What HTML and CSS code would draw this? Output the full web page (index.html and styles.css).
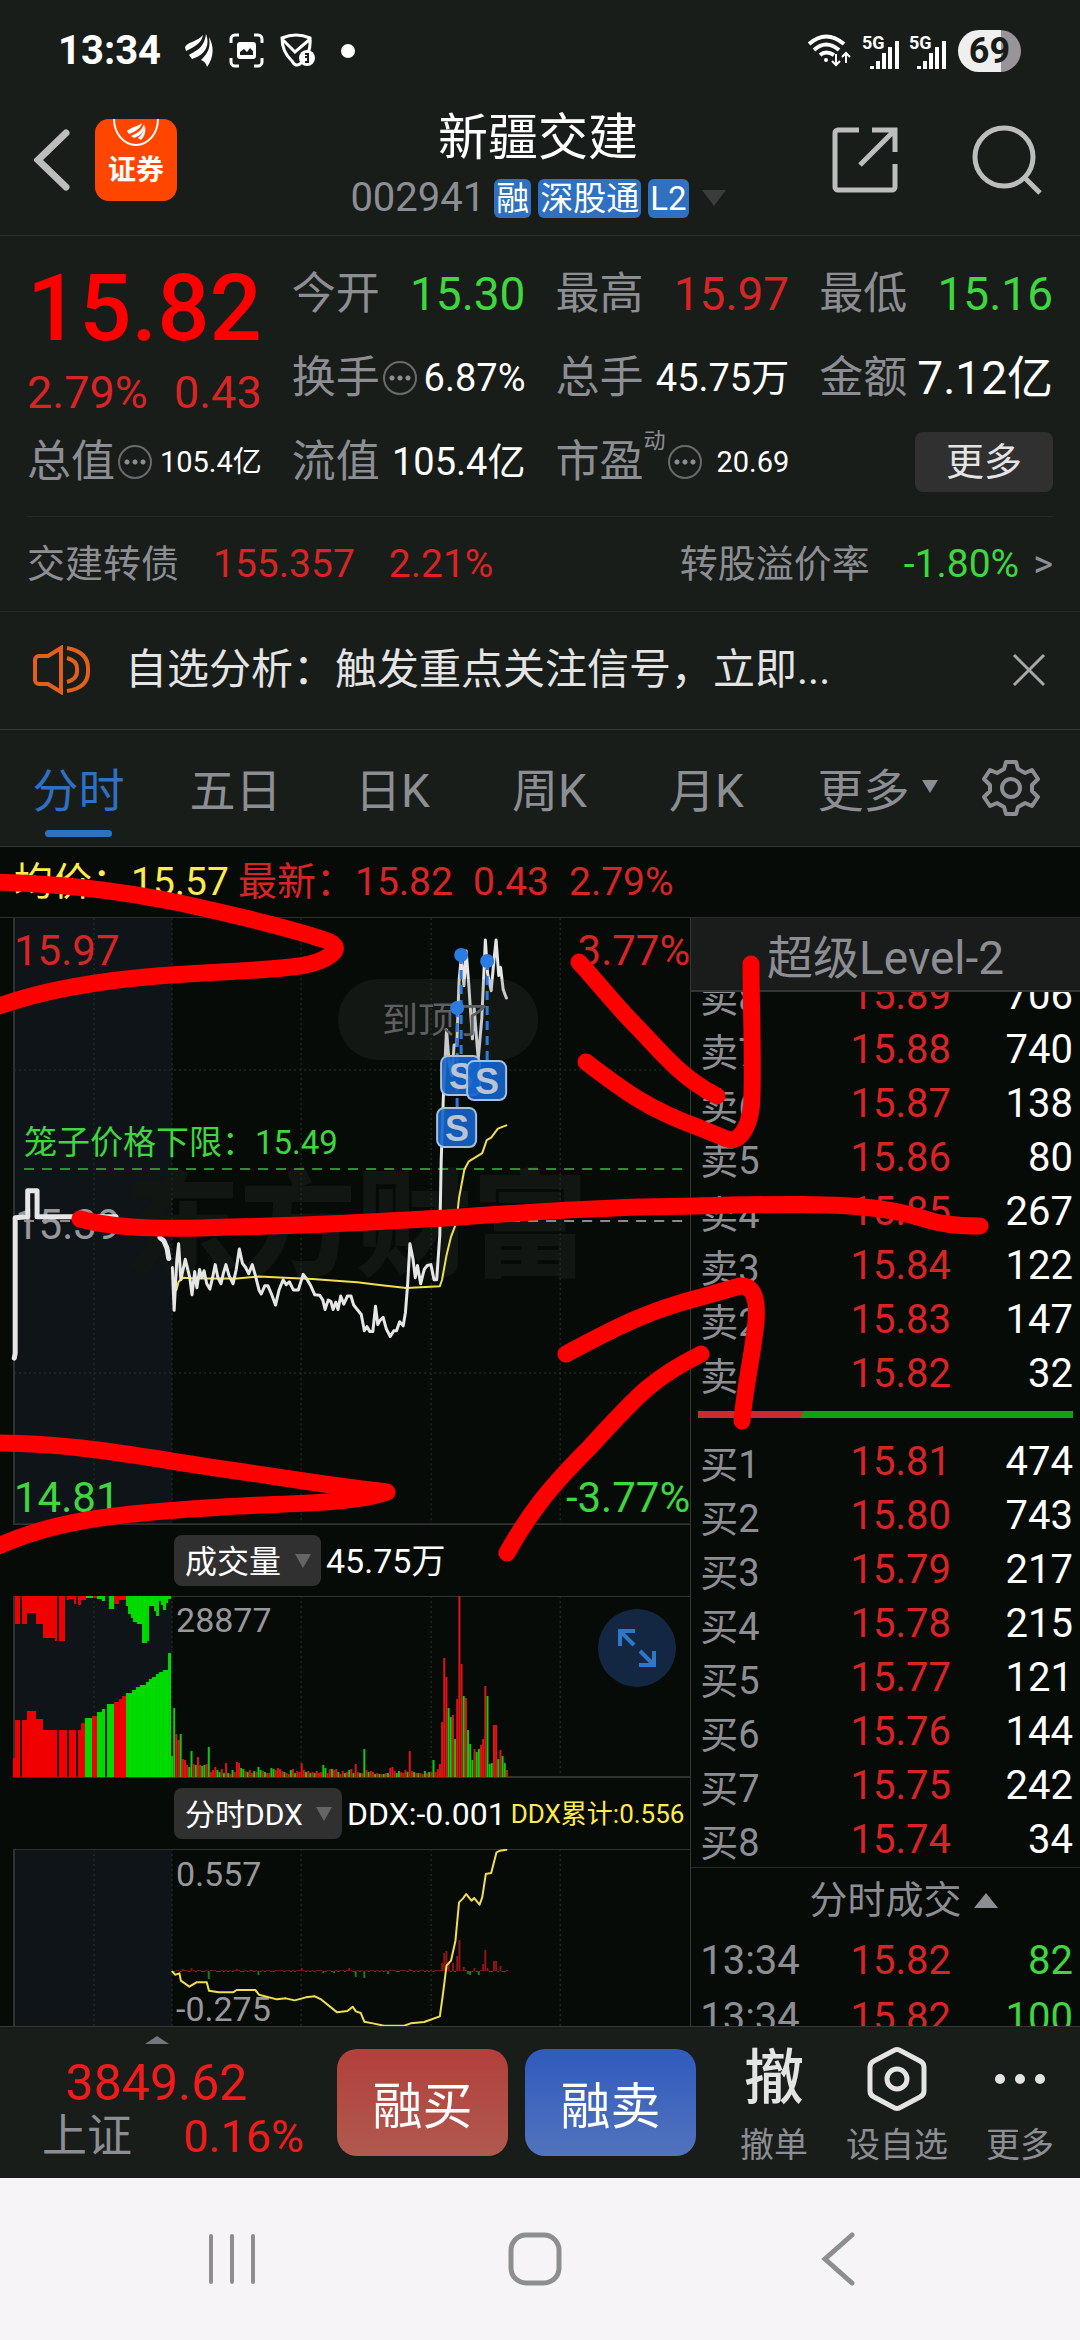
FILE: index.html
```html
<!DOCTYPE html>
<html lang="zh-CN">
<head>
  <meta charset="UTF-8">
  <meta name="viewport" content="width=device-width, initial-scale=1.0">
  <title>新疆交建 002941</title>
  <link rel="stylesheet" href="styles.css">
</head>
<body>
  <!-- Status bar -->
  <div class="status">
    <div class="status-left">
      <span class="clock">13:34</span>
      <svg width="28" height="34" viewBox="0 0 28 34" fill="#fff"><path d="M0 13C4 7 12 8 18 1C17 9 9 13 1 17zM4 21C12 16 19 14 21 0C26 13 18 22 7 25zM16 26C22 20 26 15 24 3C30 14 28 25 22 33C21 29 19 27 16 26z"/></svg>
      <svg width="35" height="35" viewBox="0 0 35 35"><path d="M2 10V6a4 4 0 0 1 4-4h4M25 2h4a4 4 0 0 1 4 4v4M33 25v4a4 4 0 0 1-4 4h-4M10 33H6a4 4 0 0 1-4-4v-4" fill="none" stroke="#fff" stroke-width="3"/><rect x="8" y="9" width="19" height="17" rx="3" fill="#fff"/><path d="M11 22v-3l4-3 3 3 3-4 3 3v4z" fill="#191d1a"/></svg>
      <svg width="35" height="35" viewBox="0 0 35 35"><path d="M2 5Q16-1 30 5C31 16 28 23 20 31Q15 34 12 28Q2 19 2 5zM3 7l12 12L29 7" fill="none" stroke="#fff" stroke-width="3"/><circle cx="27" cy="25" r="8" fill="#fff"/><path d="M25 21h3v3h-3M28 25v4h-3" fill="none" stroke="#191d1a" stroke-width="2"/></svg>
      <span class="dot"></span>
    </div>
    <div class="status-right">
      <svg width="44" height="34" viewBox="0 0 44 34" fill="none" stroke="#fff" stroke-width="4"><path d="M1 10Q18-5 36 10M6 16Q18 5 31 16M12 21Q18 16 26 21" /><circle cx="18" cy="26" r="2" fill="#fff" stroke="none"/><path d="M28 20v11M24 27l4 4 4-4M38 29V19M34 23l4-4 4 4" stroke-width="2"/></svg>
      <svg width="37" height="38" viewBox="0 -4 37 38"><text x="0" y="13" class="net">5G</text><path d="M10 33v-3M16 33v-8M22 33V17M28 33V11M35 33V5" stroke="#fff" stroke-width="4"/></svg>
      <svg width="37" height="38" viewBox="0 -4 37 38"><text x="0" y="13" class="net">5G</text><path d="M10 33v-3M16 33v-8M22 33V17M28 33V11M35 33V5" stroke="#fff" stroke-width="4"/></svg>
      <span class="battery">69</span>
    </div>
  </div>

  <!-- Header -->
  <header class="header">
    <div class="header-side">
      <button class="icon-btn" aria-label="返回"><svg width="36" height="62" viewBox="0 0 36 62"><path d="M32 4L4 31l28 27" fill="none" stroke="#bdbdbd" stroke-width="7" stroke-linecap="round"/></svg></button>
      <button class="app-btn">
        <svg width="48" height="28" viewBox="0 0 48 28"><path d="M2 0a22 26 0 0 0 44 0" fill="none" stroke="#fff" stroke-width="2"/><path d="M15 12C19 8 25 8 30 4C29 10 22 13 17 15zM19 17C26 14 30 11 32 5C34 12 28 17 22 19zM26 19C30 16 32 12 33 7C34 12 33 17 29 21z" fill="#fff"/></svg>
        <span>证券</span>
      </button>
    </div>
    <div class="heading">
      <h1>新疆交建</h1>
      <div class="code"><span>002941</span><b>融</b><b>深股通</b><b>L2</b><i class="tri-down"></i></div>
    </div>
    <div class="header-side header-right">
      <button class="icon-btn" aria-label="分享"><svg width="66" height="66" viewBox="0 0 66 66" fill="none" stroke="#bdbdbd" stroke-width="5"><path d="M27 3H6a3 3 0 0 0-3 3V60a3 3 0 0 0 3 3H60a3 3 0 0 0 3-3V37M40 3H63V25M62 4L28 38"/></svg></button>
      <button class="icon-btn" aria-label="搜索"><svg width="70" height="70" viewBox="0 0 70 70" fill="none" stroke="#bdbdbd" stroke-width="5"><circle cx="32" cy="32" r="29"/><path d="M52 52l16 16"/></svg></button>
    </div>
  </header>

  <!-- Quote -->
  <section class="quote">
    <div class="price-cell">
      <div class="price">15.82</div>
      <div class="change"><span>2.79%</span><span>0.43</span></div>
    </div>
    <div class="cell"><span class="name">今开</span><span class="xl green">15.30</span></div>
    <div class="cell"><span class="name">最高</span><span class="xl red">15.97</span></div>
    <div class="cell"><span class="name">最低</span><span class="xl green">15.16</span></div>
    <div class="cell"><span class="name">换手</span><i class="info"></i><span class="md">6.87%</span></div>
    <div class="cell"><span class="name">总手</span><span class="md">45.75万</span></div>
    <div class="cell"><span class="name">金额</span><span class="xl">7.12亿</span></div>
    <div class="cell"><span class="name">总值</span><i class="info"></i><span class="sm">105.4亿</span></div>
    <div class="cell"><span class="name">流值</span><span class="md">105.4亿</span></div>
    <div class="cell"><span class="name">市盈<sup>动</sup></span><i class="info info-sup"></i><span class="sm">20.69</span></div>
    <div class="cell"><button class="more-btn">更多</button></div>
  </section>

  <a class="bond" href="#bond">
    <span>交建转债</span><span class="red">155.357</span><span class="red">2.21%</span>
    <span class="bond-rate">转股溢价率</span><span class="green">-1.80%</span><span>&gt;</span>
  </a>

  <div class="notice">
    <svg width="58" height="50" viewBox="0 0 58 50" fill="none" stroke="#e0601c" stroke-width="4"><path d="M28 3L15 11H6a4 4 0 0 0-4 4v20a4 4 0 0 0 4 4h9l13 8zM34 13Q45 16 44 25Q45 34 34 37M34 3Q56 7 55 25Q56 43 34 46"/></svg>
    <p>自选分析：触发重点关注信号，立即...</p>
    <button class="icon-btn" aria-label="关闭"><svg width="34" height="34" viewBox="0 0 34 34"><path d="M2 2l30 30M32 2L2 32" stroke="#a8a8a8" stroke-width="3"/></svg></button>
  </div>

  <nav class="tabs">
    <button class="tab active">分时</button>
    <button class="tab">五日</button>
    <button class="tab">日K</button>
    <button class="tab">周K</button>
    <button class="tab">月K</button>
    <button class="tab">更多<i class="tri-small"></i></button>
    <button class="tab-gear" aria-label="设置"><svg width="58" height="58" viewBox="0 0 58 58" fill="none" stroke="#8d8e94" stroke-width="4"><path d="M24 3H34L36 10L43 14L50 11L56 20L50 26V32L56 38L50 47L43 44L36 48L34 55H24L22 48L15 44L8 47L2 38L8 32V26L2 20L8 11L15 14L22 10z" stroke-linejoin="round"/><circle cx="29" cy="29" r="9"/></svg></button>
  </nav>

  <main class="board">
    <div class="latest">
      <span class="yellow">均价：15.57</span>
      <span class="red latest-price"><span>最新：15.82</span><span>0.43</span><span>2.79%</span></span>
    </div>

    <div class="columns">
      <div class="charts">
        <!-- Intraday price -->
        <svg class="plot" viewBox="0 0 690 607">
          <rect x="14" width="158" height="606" fill="#0f1419"/>
          <text x="124" y="349" class="watermark">东方财富</text>
          <path d="M94 0V606M172 0V606M301 0V606M431 0V606M560 0V606M14 152H690M14 455H690" class="grid"/>
          <path d="M14 0V606H690" class="axis"/>
          <path d="M24 251H682" stroke="#2f8f36" stroke-width="2" stroke-dasharray="10 8"/>
          <path d="M24 303H682" stroke="#8b8b8b" stroke-width="2" stroke-dasharray="10 8"/>
          <text x="15" y="321" class="t42" fill="#98989c">15.39</text>
          <g transform="translate(0 -18) scale(.4464 .4082)" class="lines">
            <polyline stroke="#f0df50" stroke-width="2" points="395,955 400,935 410,925 440,927 530,927 580,922 650,926 700,928 760,933 800,936 850,943 910,950 985,946 990,930 1000,870 1010,825 1022,790 1028,730 1040,660 1050,640 1080,620 1090,588 1100,582 1115,560 1134,552"/>
            <polyline stroke="#e6e6e6" stroke-width="3" points="386,900 390,1005 396,880 400,842 405,930 415,880 425,925 430,967 436,910 441,950 447,905 452,925 457,908 463,940 470,953 476,925 482,893 488,925 495,940 500,915 506,893 513,920 522,940 529,905 536,855 543,890 550,900 557,915 565,893 572,920 580,955 585,965 593,945 600,945 608,965 617,992 625,955 634,930 641,942 648,935 657,955 668,955 679,917 688,930 696,945 705,967 716,968 723,980 728,1003 735,980 741,983 746,1003 752,985 757,1003 763,970 770,990 778,970 786,970 792,992 800,1003 809,1015 816,1055 822,1045 828,1057 835,1057 841,995 846,1040 851,1030 858,1022 865,1050 874,1069 882,1055 888,1055 895,1033 903,1043 908,1010 913,940 918,842 925,880 930,925 935,895 942,940 950,905 957,895 965,893 972,930 978,930 985,820 988,640 993,480 1000,318 1006,400 1012,430 1017,355 1023,355 1028,200 1033,140 1039,210 1044,125 1050,210 1058,340 1062,265 1071,390 1079,290 1087,98 1092,180 1100,222 1106,150 1111,98 1117,185 1121,165 1127,220 1134,240"/>
            <polyline stroke="#e6e6e6" stroke-width="5" points="32,1122 34,1110 34,778 62,776 62,712 83,712 83,776 260,776"/>
            <polyline stroke="#e6e6e6" stroke-width="5" points="358,827 367,835 374,853 378,878"/>
          </g>
          <text x="24" y="236" class="t33" fill="#3fd63f">笼子价格下限：15.49</text>
          <text x="14" y="47" class="t42" fill="#d82424">15.97</text>
          <text x="690" y="47" class="t42" fill="#d82424" text-anchor="end">3.77%</text>
          <text x="14" y="594" class="t42" fill="#3fd63f">14.81</text>
          <text x="690" y="594" class="t42" fill="#3fd63f" text-anchor="end">-3.77%</text>
          <rect x="338" y="61" width="200" height="81" rx="40" fill="#4a504c" fill-opacity=".18"/>
          <text x="382" y="115" class="t36" fill="#5e5f60">到顶了</text>
          <g stroke="#2b7be0" stroke-width="3" stroke-dasharray="9 6"><path d="M461 37V138M487 43V143M457 90V190"/></g>
          <g fill="#2b7be0"><circle cx="461" cy="37" r="7"/><circle cx="487" cy="43" r="7"/><circle cx="457" cy="90" r="7"/></g>
          <g class="mark">
            <rect x="441" y="138" width="39" height="39" rx="7"/><text x="461" y="171">S</text>
            <rect x="467" y="143" width="39" height="39" rx="7"/><text x="487" y="176">S</text>
            <rect x="437" y="190" width="39" height="39" rx="7"/><text x="457" y="223">S</text>
          </g>
        </svg>

        <!-- Volume -->
        <div class="indicator">
          <div class="picker"><select class="f32" aria-label="指标一"><option>成交量</option></select></div>
          <span class="f34">45.75万</span>
        </div>
        <div class="plot-wrap">
          <svg class="plot" viewBox="0 0 690 182">
            <rect x="14" width="158" height="181" fill="#0f1419"/>
            <path d="M94 0V181M172 0V181M301 0V181M431 0V181M560 0V181" class="grid"/>
            <path d="M14 0V181H690M14 0H690" class="axis"/>
            <g id="auction"></g>
            <g id="volume"></g>
            <text x="176" y="36" class="t34" fill="#98989c">28877</text>
          </svg>
          <button class="expand" aria-label="全屏"><svg width="40" height="40" viewBox="0 0 40 40" fill="none" stroke="#2f77c8" stroke-width="4"><path d="M3 18V3H18M4 4L17 17M37 23V37H22M36 36L23 23"/></svg></button>
        </div>

        <!-- DDX -->
        <div class="indicator">
          <div class="picker"><select class="f30" aria-label="指标二"><option>分时DDX</option></select></div>
          <span class="f32">DDX:-0.001</span>
          <span class="f26 yellow">DDX累计:0.556</span>
        </div>
        <svg class="plot" viewBox="0 0 690 177">
          <rect x="14" width="158" height="177" fill="#0f1419"/>
          <path d="M94 0V177M172 0V177M301 0V177M431 0V177M560 0V177" class="grid"/>
          <path d="M14 177V0H690" class="axis"/>
          <g id="ddx"></g>
          <text x="176" y="37" class="t34" fill="#98989c">0.557</text>
          <text x="176" y="172" class="t34" fill="#98989c">-0.275</text>
          <g transform="scale(.4464 .3333) translate(0 -985)" class="lines">
            <polyline stroke="#f0df50" stroke-width="2" points="386,1353 392,1362 402,1358 405,1380 424,1398 440,1385 463,1385 468,1410 490,1415 522,1415 530,1408 572,1408 580,1422 620,1436 640,1433 660,1439 685,1430 705,1427 720,1437 755,1475 778,1471 790,1458 797,1472 808,1477 816,1503 835,1508 860,1515 905,1515 920,1508 950,1504 985,1487 992,1420 1000,1335 1010,1320 1020,1260 1028,1145 1037,1133 1044,1120 1056,1140 1062,1132 1074,1152 1080,1130 1088,1060 1100,1057 1112,995 1120,990 1134,987"/>
          </g>
        </svg>
      </div>

      <!-- Order book -->
      <div class="depth">
        <button class="level">超级Level-2</button>
        <div class="asks">
          <table class="book">
            <tr><th>卖8</th><td>15.89</td><td>706</td></tr>
            <tr><th>卖7</th><td>15.88</td><td>740</td></tr>
            <tr><th>卖6</th><td>15.87</td><td>138</td></tr>
            <tr><th>卖5</th><td>15.86</td><td>80</td></tr>
            <tr><th>卖4</th><td>15.85</td><td>267</td></tr>
            <tr><th>卖3</th><td>15.84</td><td>122</td></tr>
            <tr><th>卖2</th><td>15.83</td><td>147</td></tr>
            <tr><th>卖1</th><td>15.82</td><td>32</td></tr>
          </table>
        </div>
        <div class="ratio"></div>
        <table class="book">
          <tr><th>买1</th><td>15.81</td><td>474</td></tr>
          <tr><th>买2</th><td>15.80</td><td>743</td></tr>
          <tr><th>买3</th><td>15.79</td><td>217</td></tr>
          <tr><th>买4</th><td>15.78</td><td>215</td></tr>
          <tr><th>买5</th><td>15.77</td><td>121</td></tr>
          <tr><th>买6</th><td>15.76</td><td>144</td></tr>
          <tr><th>买7</th><td>15.75</td><td>242</td></tr>
          <tr><th>买8</th><td>15.74</td><td>34</td></tr>
        </table>
        <button class="trades-title">分时成交<i class="tri-up"></i></button>
        <div class="trades">
          <table class="book ticks">
            <tr><th>13:34</th><td>15.82</td><td>82</td></tr>
            <tr><th>13:34</th><td>15.82</td><td>100</td></tr>
          </table>
        </div>
      </div>
    </div>

    <!-- Hand-drawn marks -->
    <svg class="marks" viewBox="0 847 1080 1178">
      <path d="M-10 882C60 884 110 889 180 903C230 914 290 928 325 940C350 948 325 962 300 966C250 973 180 971 110 981C60 988 30 995-10 1009"/>
      <path d="M-10 1443C80 1443 140 1457 223 1469C280 1477 330 1486 387 1492C350 1505 280 1503 223 1507C120 1513 50 1520-10 1550"/>
      <path d="M80 1219C120 1230 180 1229 230 1227C320 1226 400 1220 446 1218C530 1212 600 1207 696 1206C770 1204 840 1203 880 1209C915 1213 930 1223 947 1224Q960 1226 980 1226"/>
      <path d="M579 962C600 985 615 1005 640 1030C665 1057 685 1080 717 1096"/>
      <path d="M586 1062C625 1092 650 1110 700 1128L727 1139C740 1144 752 1125 752 1095C753 1050 751 1000 751 964"/>
      <path d="M566 1354C620 1325 650 1310 705 1296L740 1286C752 1285 758 1296 756 1321C753 1355 745 1385 742 1421"/>
      <path d="M507 1553C530 1512 550 1487 590 1447C640 1392 655 1377 701 1354"/>
    </svg>
  </main>

  <!-- Trade bar -->
  <footer class="trade-bar">
    <a class="index" href="#index">
      <i class="tri-index"></i>
      <span class="index-value">3849.62</span>
      <span class="index-row"><span class="muted">上证</span><span>0.16%</span></span>
    </a>
    <button class="trade buy">融买</button>
    <button class="trade sell">融卖</button>
    <button class="tool"><span class="tool-icon">撤</span>撤单</button>
    <button class="tool"><span class="tool-icon"><svg width="60" height="66" viewBox="0 0 60 66" fill="none" stroke="#e4e4e4" stroke-width="5"><path d="M26 5Q30 2 34 5L53 15Q57 17 57 21V45Q57 49 53 51L34 61Q30 64 26 61L7 51Q3 49 3 45V21Q3 17 7 15z"/><circle cx="30" cy="33" r="10"/></svg></span>设自选</button>
    <button class="tool"><span class="tool-icon"><svg width="52" height="12" viewBox="0 0 52 12" fill="#e4e4e4"><circle cx="6" cy="6" r="5"/><circle cx="26" cy="6" r="5"/><circle cx="46" cy="6" r="5"/></svg></span>更多</button>
  </footer>

  <div class="sys-nav">
    <button class="icon-btn" aria-label="最近"><svg width="50" height="54" viewBox="0 0 50 54" stroke="#8c8f8e" stroke-width="4" stroke-linecap="round"><path d="M4 4V50M25 4V50M46 4V50"/></svg></button>
    <button class="icon-btn" aria-label="主页"><svg width="54" height="54" viewBox="0 0 54 54" fill="none" stroke="#8c8f8e" stroke-width="5"><rect x="3" y="3" width="48" height="48" rx="15"/></svg></button>
    <button class="icon-btn" aria-label="后退"><svg width="34" height="54" viewBox="0 0 34 54" fill="none" stroke="#8c8f8e" stroke-width="5" stroke-linecap="round"><path d="M31 3L4 27L31 51"/></svg></button>
  </div>

  <script src="script.js"></script>
</body>
</html>
```

FILE: styles.css
```css
* {
  box-sizing: border-box;
}
body {
  margin: 0;
  background: #191d1a;
  color: #fff;
  font-family: Roboto, "Noto Sans CJK SC", sans-serif;
  font-size: 38px;
  line-height: 54px;
}
button, select {
  margin: 0;
  padding: 0;
  border: none;
  background: none;
  color: inherit;
  font: inherit;
}
a {
  color: inherit;
  text-decoration: none;
}
svg {
  display: block;
}
.red { color: #d82424; }
.green { color: #3fd63f; }
.yellow { color: #ffea4f; }
.muted { color: #8d8e94; }

/* status bar */
.status {
  display: flex;
  justify-content: space-between;
  align-items: center;
  height: 99px;
  padding: 2px 59px 0 58px;
}
.status-left, .status-right {
  display: flex;
  align-items: center;
  gap: 16px;
}
.status-right {
  gap: 10px;
}
.clock {
  margin-right: 8px;
  font-size: 40px;
  font-weight: 700;
}
.dot {
  width: 14px;
  height: 14px;
  margin-left: 10px;
  border-radius: 50%;
  background: #fff;
}
.net {
  fill: #fff;
  font-size: 18px;
  font-weight: 700;
}
.battery {
  width: 63px;
  margin-left: 2px;
  border-radius: 21px;
  background: linear-gradient(90deg, #efefef 69%, #989498 69%);
  color: #191d1a;
  font-size: 36px;
  font-weight: 700;
  line-height: 42px;
  text-align: center;
}

/* header */
.header {
  display: grid;
  grid-template-columns: 1fr auto 1fr;
  align-items: center;
  padding: 9px 38px 7px 34px;
  border-bottom: 1px solid #2b2e2c;
}
.header-side {
  display: flex;
  align-items: center;
  gap: 25px;
  padding-bottom: 16px;
}
.header-right {
  justify-content: flex-end;
  gap: 74px;
}
.app-btn {
  display: flex;
  flex-direction: column;
  align-items: center;
  width: 82px;
  height: 82px;
  border-radius: 14px;
  background: #ff4600;
  font-size: 28px;
  font-weight: 700;
  line-height: 48px;
}
.heading {
  text-align: center;
}
h1 {
  margin: 0;
  font-size: 50px;
  font-weight: 400;
  line-height: 60px;
}
.code {
  display: flex;
  align-items: center;
  gap: 7px;
  height: 60px;
  color: #8d8e94;
  font-size: 40px;
}
.code span {
  margin-right: 2px;
}
.code b {
  padding: 0 2px;
  border-radius: 6px;
  background: #2f71c0;
  color: #fff;
  font-size: 33px;
  font-weight: 400;
  line-height: 39px;
}
.tri-down {
  margin-left: 6px;
  border: 12px solid transparent;
  border-top: 16px solid #3a3c3b;
  border-bottom: none;
}

/* quote */
.quote {
  display: grid;
  grid-template-columns: repeat(4, 1fr);
  grid-auto-rows: 84px;
  column-gap: 30px;
  margin: 0 27px;
  padding: 16px 0 12px;
  border-bottom: 1px solid #262928;
}
.price-cell {
  grid-row: span 2;
}
.price {
  color: #ff0000;
  font-size: 92px;
  font-weight: 500;
  line-height: 114px;
}
.change {
  display: flex;
  justify-content: space-between;
  color: #d82424;
  font-size: 45px;
}
.cell {
  display: flex;
  align-items: center;
}
.name {
  position: relative;
  color: #8d8e94;
  font-size: 44px;
}
.cell > :last-child {
  margin-left: auto;
}
.xl { font-size: 46px; }
.md { font-size: 38px; }
.sm { font-size: 29px; }
sup {
  position: absolute;
  top: -6px;
  left: 100%;
  font-size: 22px;
  line-height: 24px;
}
.info {
  width: 34px;
  height: 34px;
  margin-left: 3px;
  border: 2px solid #6a6a6c;
  border-radius: 50%;
  background: radial-gradient(circle at 7px 15px, #8d8e94 2px, transparent 3px), radial-gradient(circle at 15px 15px, #8d8e94 2px, transparent 3px), radial-gradient(circle at 23px 15px, #8d8e94 2px, transparent 3px);
}
.info-sup {
  margin-left: 25px;
}
.more-btn {
  width: 138px;
  height: 60px;
  border-radius: 8px;
  background: #303030;
  color: #e4e4e4;
}

.bond {
  display: flex;
  gap: 34px;
  padding: 20px 27px;
  border-bottom: 1px solid #262928;
  color: #8d8e94;
}
.bond .red, .bond .green {
  font-size: 39px;
}
.bond-rate {
  margin-left: auto;
}
.bond > :last-child {
  margin-left: -20px;
}

.notice {
  display: flex;
  align-items: center;
  padding: 31px 34px 32px 33px;
  border-bottom: 1px solid #333635;
}
.notice p {
  flex: 1;
  margin: 0 34px;
  color: #e4e4e4;
  font-size: 42px;
}

/* tabs */
.tabs {
  display: flex;
  height: 117px;
  border-bottom: 1px solid #333635;
}
.tab {
  position: relative;
  flex: 157;
  padding-top: 6px;
  color: #8d8e94;
  font-size: 46px;
}
.active {
  color: #2f71c0;
}
.active::after {
  content: "";
  position: absolute;
  bottom: 9px;
  left: 45px;
  right: 45px;
  height: 7px;
  border-radius: 4px;
  background: #2f71c0;
}
.tab-gear {
  display: flex;
  flex: 138;
  align-items: center;
  justify-content: center;
}
.tri-small {
  position: absolute;
  top: 50px;
  right: 4px;
  border: 8px solid transparent;
  border-top: 13px solid #8d8e94;
  border-bottom: none;
}

/* board */
.board {
  position: relative;
  overflow: hidden;
  background: #070b08;
  border-bottom: 1px solid #333635;
}
.latest {
  display: flex;
  gap: 9px;
  padding: 8px 14px;
  border-bottom: 1px solid #2b2e2c;
  font-size: 39px;
}
.latest-price {
  display: flex;
  gap: 20px;
}
.columns {
  display: grid;
  grid-template-columns: 16fr 9fr;
}
.charts {
  border-right: 1px solid #333635;
}
.plot {
  width: 100%;
  height: auto;
}
.plot-wrap {
  position: relative;
}
.grid {
  fill: none;
  stroke: #2c302e;
  stroke-dasharray: 2 3;
}
.axis {
  fill: none;
  stroke: #2f3231;
  stroke-width: 2;
}
.lines polyline {
  fill: none;
  stroke-linejoin: round;
  stroke-linecap: round;
  vector-effect: non-scaling-stroke;
}
.t33 { font-size: 33px; }
.t34 { font-size: 34px; }
.t36 { font-size: 36px; }
.t42 { font-size: 42px; }
.watermark {
  fill: #121613;
  font-size: 116px;
  font-weight: 900;
}
.mark rect {
  fill: #1564cc;
  fill-opacity: .9;
  stroke: #a9bfdf;
  stroke-width: 2;
}
.mark text {
  fill: #b9c4d4;
  font: 700 36px "Liberation Sans", sans-serif;
  text-anchor: middle;
}
.indicator {
  display: flex;
  align-items: center;
  gap: 5px;
  height: 71px;
  padding-left: 174px;
  white-space: nowrap;
}
.picker {
  position: relative;
}
.picker select {
  display: block;
  height: 51px;
  padding: 0 39px 0 11px;
  border-radius: 8px;
  background: #303030;
  appearance: none;
}
.picker::after {
  content: "";
  position: absolute;
  top: 19px;
  right: 10px;
  border: 8px solid transparent;
  border-top: 14px solid #636664;
  border-bottom: none;
}
.picker .f32, .f32 { font-size: 32px; }
.picker .f30 { font-size: 30px; }
.f34 { font-size: 34px; }
.f26 { font-size: 26px; }
.expand {
  display: flex;
  align-items: center;
  justify-content: center;
  position: absolute;
  top: 13px;
  right: 14px;
  width: 78px;
  height: 78px;
  border-radius: 50%;
  background: #132743;
}

/* order book */
.depth {
  display: flex;
  flex-direction: column;
}
.level {
  height: 74px;
  padding-top: 8px;
  border-bottom: 2px solid #333635;
  background: #191c1a;
  color: #8d8e94;
  font-size: 46px;
}
.asks {
  display: flex;
  flex-direction: column;
  justify-content: flex-end;
  height: 409px;
  overflow: hidden;
}
.book {
  flex: none;
  width: 100%;
  border-collapse: collapse;
  table-layout: fixed;
  font-size: 40px;
}
.book tr {
  height: 54px;
}
.book th {
  width: 41%;
  padding: 6px 0 0 9px;
  color: #8d8e94;
  font-size: 38px;
  font-weight: 400;
  line-height: 48px;
  text-align: left;
}
.book td {
  padding: 0;
  color: #d82424;
}
.book td:last-child {
  padding-right: 7px;
  color: #fff;
  text-align: right;
}
.ratio {
  height: 7px;
  margin: 10px 7px 17px;
  background: linear-gradient(120deg, #c82c2c 28%, #12a012 28%);
}
.trades-title {
  display: flex;
  align-items: center;
  justify-content: center;
  gap: 12px;
  height: 65px;
  padding-left: 36px;
  border-top: 1px solid #262928;
  color: #8d8e94;
}
.tri-up {
  border: 12px solid transparent;
  border-top: none;
  border-bottom: 15px solid #8d8e94;
}
.trades {
  flex: 1;
  contain: size;
  overflow: hidden;
}
.ticks tr {
  height: 57px;
}
.ticks th {
  padding-top: 0;
  font-size: 40px;
}
.ticks td:last-child {
  color: #3fd63f;
}
.marks {
  position: absolute;
  top: 0;
  left: 0;
  width: 100%;
  fill: none;
  stroke: #ff0000;
  stroke-width: 17;
  stroke-linecap: round;
  stroke-linejoin: round;
  pointer-events: none;
}

/* trade bar */
.trade-bar {
  display: flex;
  align-items: center;
  height: 151px;
  padding: 0 24px 0 34px;
}
.index {
  display: flex;
  flex-direction: column;
  align-items: center;
  flex: 1;
  min-width: 0;
  height: 142px;
  padding-right: 58px;
  color: #f01c1c;
}
.tri-index {
  border: 12px solid transparent;
  border-top: none;
  border-bottom: 8px solid #74777a;
  margin: 4px 0 12px;
}
.index-value {
  font-size: 50px;
}
.index-row {
  display: flex;
  justify-content: space-between;
  align-self: flex-start;
  width: 270px;
  padding-left: 8px;
  font-size: 45px;
}
.trade {
  flex: none;
  width: 171px;
  height: 107px;
  margin-right: 17px;
  padding-top: 8px;
  border-radius: 20px;
  font-size: 50px;
}
.buy { background: linear-gradient(#b23f3b, #b05a50); }
.sell { background: linear-gradient(#2f5bbd, #5273bd); }
.tool {
  display: flex;
  flex: none;
  flex-direction: column;
  align-items: center;
  margin-left: 25px;
  padding: 0 2px;
  color: #8d8e94;
  font-size: 34px;
  line-height: 48px;
}
.tool + .tool {
  margin-left: 34px;
}
.tool-icon {
  display: flex;
  align-items: center;
  height: 84px;
  color: #e4e4e4;
  font-size: 60px;
  font-weight: 500;
}

.sys-nav {
  display: grid;
  grid-template-columns: repeat(3, 1fr);
  justify-items: center;
  align-items: center;
  height: 162px;
  padding: 0 90px 0 80px;
  background: #f7f4f8;
}
```

FILE: script.js
```js
const RED = '#e01414';
const GREEN = '#12c812';

function addRect(id, x, y, w, h, color) {
  const rect = document.createElementNS('http://www.w3.org/2000/svg', 'rect');
  rect.setAttribute('x', x);
  rect.setAttribute('y', y);
  rect.setAttribute('width', w);
  rect.setAttribute('height', h);
  rect.setAttribute('fill', color);
  document.getElementById(id).appendChild(rect);
}

// call auction: [x, width, height], height < 0 means green
const auctionTop = [
  [15, 5, 28], [22, 5, 28], [27, 9, 17], [36, 7, 28], [43, 12, 42], [55, 2, 45], [59, 6, 45],
  [67, 2, 4], [69, 5, 3], [74, 2, 8], [78, 3, 9], [81, 5, 4], [86, 7, -2], [93, 4, 2],
  [97, 5, -3], [102, 3, -5], [109, 5, -13], [114, 5, 8], [119, 7, 4], [126, 2, -10],
  [128, 3, -18], [131, 2, -22], [133, 4, -26], [137, 5, -28], [142, 5, -47], [147, 2, -45],
  [149, 5, -10], [154, 2, -15], [156, 3, -20], [159, 2, -5], [161, 2, -9], [163, 3, -14],
  [166, 2, -7], [168, 3, -3],
];
const auctionBottom = [
  [13, 2, 19], [15, 5, 57], [22, 5, 57], [27, 9, 66], [36, 7, 58], [43, 14, 47], [59, 8, 47],
  [69, 7, 47], [78, 3, 47], [81, 4, 54], [85, 7, -59], [92, 5, 61], [97, 5, -65], [102, 3, -68],
  [107, 7, -73], [114, 5, 75], [119, 3, 78], [122, 4, 81], [126, 6, -84], [132, 4, -87],
  [136, 4, -90], [140, 6, -92], [146, 3, -95], [149, 3, -98], [152, 4, -100], [156, 3, -103],
  [159, 4, -105], [163, 5, -107], [168, 3, -124],
];
auctionTop.forEach(([x, w, h]) => addRect('auction', x, 0, w, Math.abs(h), h > 0 ? '#f00000' : '#00dc00'));
auctionBottom.forEach(([x, w, h]) => addRect('auction', x, 181 - Math.abs(h), w, Math.abs(h), h > 0 ? '#f00000' : '#00dc00'));

// one bar per minute since the open
const volume = [
  -21, -69, 43, 37, -43, 18, 17, 12, -10, -26, 13, -12, 20, 12, -11, -12, 13, -30, 5, 7, 10, -7, -5, 8, -4,
  14, -4, 3, -7, 5, 15, 14, -9, -8, 6, -5, 7, 4, -6, 5, -10, -7, 6, -5, 4, 4, -9, -8, 7, 9, 8, 6, -5, 4, 3,
  -7, 8, -4, 6, 5, 14, 7, -5, 6, -4, 5, -4, 6, 4, 5, -12, -9, 4, 8, -8, 7, 8, -5, 3, 6, -4, 5, -7, 8, -4,
  13, 5, -4, 4, -28, 7, -5, 6, 5, -3, 4, -3, 3, -3, 4, -4, 9, 10, 6, -4, -6, 5, 4, 7, -5, 26, 6, -5, 4, -4,
  4, 3, -6, 4, -5, 5, -17, 5, 8, 13, 55, 119, 100, -69, -60, 62, -38, 78, 181, 113, -81, 79, -47, -33, -17,
  28, -25, -28, 32, 38, 91, -81, -13, -14, 52, 52, -18, 27, -21, -14, 7,
];
volume.forEach((h, i) => addRect('volume', 171 + i * 2.16, 181 - Math.abs(h), 2, Math.abs(h), h > 0 ? RED : GREEN));

// big order flow, drawn from the zero line
const flow = { 5: 2, 9: 3, 17: -8, 30: 2, 40: -4, 60: 3, 70: -2, 75: -2, 82: 3, 85: -6, 89: -7, 100: -3, 110: 2,
  125: 8, 126: 18, 127: 20, 128: 9, 130: 8, 132: 15, 133: 31, 135: 4, 137: -3, 138: -4, 140: 3, 142: -4, 144: 7,
  145: 21, 146: 3, 149: 10, 150: 10, 152: 5 };
volume.forEach((h, i) => {
  const v = flow[i] || (h > 0 ? 1 : -1);
  addRect('ddx', 171 + i * 2.16, v > 0 ? 122 - v : 122, 2, Math.abs(v), v > 0 ? '#8c1616' : '#1b7a1b');
});
```
